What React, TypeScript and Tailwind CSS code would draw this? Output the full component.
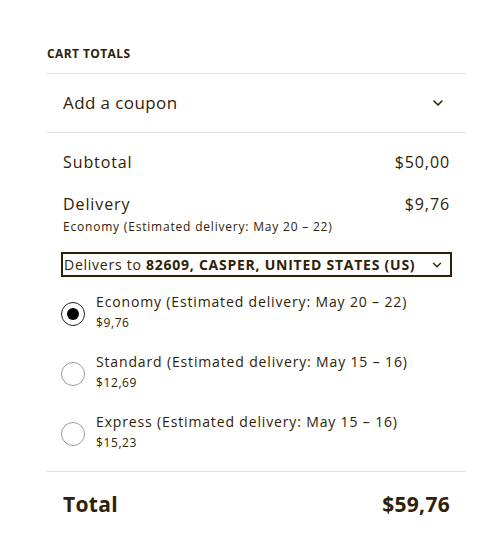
import { ChevronDown } from "lucide-react";

const options = [
  { label: "Economy (Estimated delivery: May 20 – 22)", price: "$9,76", checked: true },
  { label: "Standard (Estimated delivery: May 15 – 16)", price: "$12,69", checked: false },
  { label: "Express (Estimated delivery: May 15 – 16)", price: "$15,23", checked: false },
];

function Radio({ checked }: { checked: boolean }) {
  return (
    <span
      className={`mt-[10px] flex h-[24px] w-[24px] shrink-0 items-center justify-center rounded-full border bg-white ${
        checked ? "border-[#1e1e1e]" : "border-[#9a9a9a]"
      }`}
    >
      {checked && <span className="h-[12px] w-[12px] rounded-full bg-black" />}
    </span>
  );
}

export default function App() {
  return (
    <div className="min-h-[545px] bg-white font-['Open_Sans',sans-serif] text-[#2f2106]">
      <div className="ml-[47px] w-[419px] pt-[46px]">
        <h2 className="pb-[11px] text-[12px] font-bold uppercase leading-[16px] tracking-[0.4px]">
          Cart totals
        </h2>

        <div className="flex items-center justify-between border-y border-[#e0e0e0] px-[16px] py-[18px]">
          <span className="text-[17px] leading-[22px] tracking-[0.4px]">Add a coupon</span>
          <ChevronDown className="mr-[4px] h-[16px] w-[16px]" strokeWidth={2.4} />
        </div>

        <div className="px-[16px] pt-[19px]">
          <div className="flex justify-between text-[16px] leading-[20px] tracking-[0.9px]">
            <span>Subtotal</span>
            <span>$50,00</span>
          </div>

          <div className="mt-[22px] flex justify-between text-[16px] leading-[20px] tracking-[0.9px]">
            <span>Delivery</span>
            <span>$9,76</span>
          </div>
          <p className="mt-[5px] text-[12px] leading-[16px] tracking-[0.8px]">
            Economy (Estimated delivery: May 20 – 22)
          </p>

          <div className="-mx-[2px] mt-[17px] flex h-[25px] items-center justify-between border-2 border-[#2f2106] pl-[1px] pr-[6px]">
            <span className="text-[14px] leading-[18px] tracking-[0.75px]">
              Delivers to <b className="font-bold">82609, CASPER, UNITED STATES (US)</b>
            </span>
            <ChevronDown className="h-[14px] w-[14px]" strokeWidth={2.4} />
          </div>

          <div className="mt-[15px] flex flex-col gap-[21px]">
            {options.map((o) => (
              <div key={o.label} className="-ml-[2px] flex gap-[11px]">
                <Radio checked={o.checked} />
                <div>
                  <div className="text-[14px] font-medium leading-[20px] tracking-[0.85px]">{o.label}</div>
                  <div className="mt-[3px] text-[12px] leading-[16px] tracking-[0.6px]">{o.price}</div>
                </div>
              </div>
            ))}
          </div>
        </div>

        <div className="mt-[20px] flex items-center justify-between border-t border-[#e0e0e0] px-[16px] pt-[19px] text-[21px] font-bold leading-[26px] tracking-[0.3px]">
          <span>Total</span>
          <span>$59,76</span>
        </div>
      </div>
    </div>
  );
}
